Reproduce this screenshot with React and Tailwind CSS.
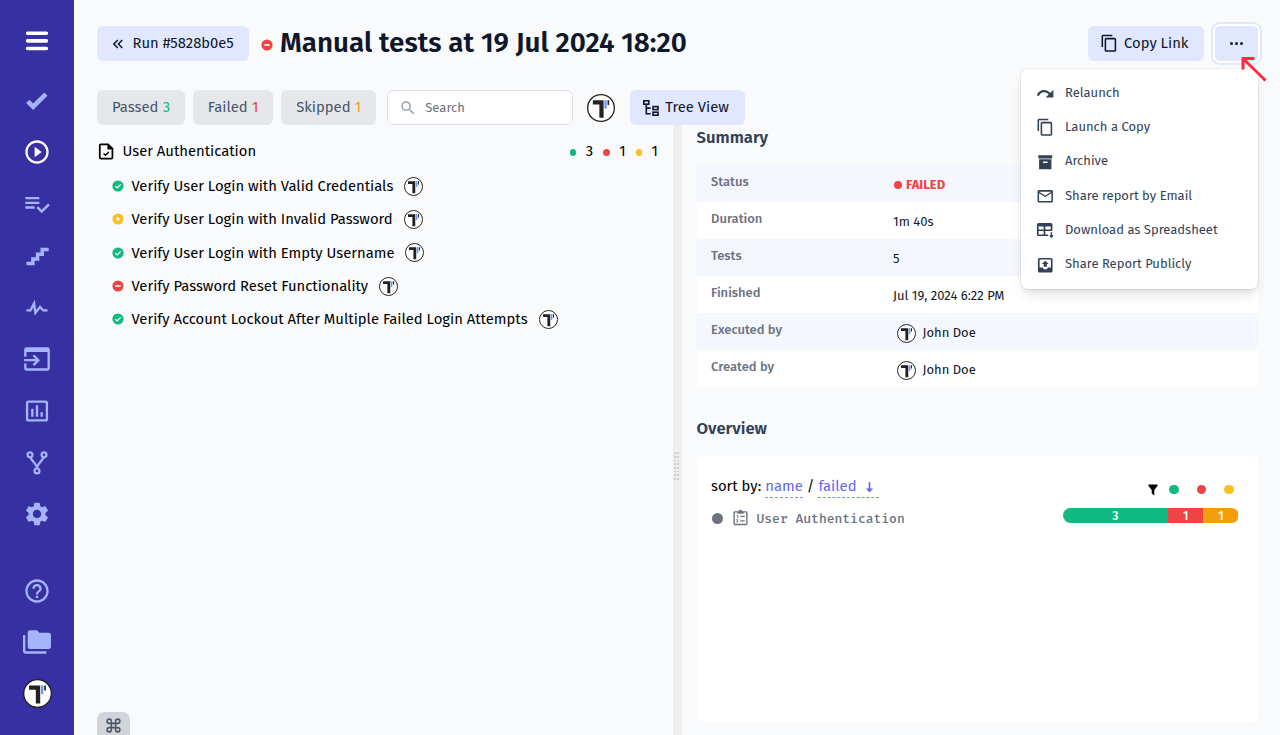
import React from "react";
import { Command } from "lucide-react";
import {
  MdPlayCircleOutline,
  MdInsertChartOutlined,
  MdSettings,
  MdHelpOutline,
  MdMailOutline,
  MdSearch,
} from "react-icons/md";

function Mdi({ d, className }) {
  return (
    <svg viewBox="0 0 24 24" className={className} fill="currentColor">
      <path d={d} />
    </svg>
  );
}

const icons = {
  check: "M9,20.42L2.79,14.21L5.62,11.38L9,14.77L18.88,4.88L21.71,7.71L9,20.42Z",
  playlist:
    "M14 10H2V12H14V10M14 6H2V8H14V6M2 16H10V14H2V16M21.5 11.5L23 13L16 20L11.5 15.5L13 14L16 17L21.5 11.5Z",
  stairs: "M15,5V9H11V13H7V17H3V20H10V16H14V12H18V8H22V5H15Z",
  pulse:
    "M3,13H5.79L10.1,4.79L11.28,13.75L14.5,9.66L17.83,13H21V15H17L14.67,12.67L9.92,18.73L8.94,11.31L7,15H3V13Z",
  importApp:
    "M1,12H10.76L8.26,9.5L9.67,8.08L14.59,13L9.67,17.92L8.26,16.5L10.76,14H1V12M21,2H3C1.89,2 1,2.9 1,4V10.06H3V6H21V20H3V15.94H1V20A2,2 0 0,0 3,22H21A2,2 0 0,0 23,20V4A2,2 0 0,0 21,2Z",
  folders:
    "M22,4H14L12,2H6A2,2 0 0,0 4,4V16A2,2 0 0,0 6,18H22A2,2 0 0,0 24,16V6A2,2 0 0,0 22,4M2,6H0V20A2,2 0 0,0 2,22H20V20H2V6Z",
  chevrons:
    "M18.41,7.41L17,6L11,12L17,18L18.41,16.59L13.83,12L18.41,7.41M12.41,7.41L11,6L5,12L11,18L12.41,16.59L7.83,12L12.41,7.41Z",
  copy: "M19,21H8V7H19M19,5H8A2,2 0 0,0 6,7V21A2,2 0 0,0 8,23H19A2,2 0 0,0 21,21V7A2,2 0 0,0 19,5M16,1H4A2,2 0 0,0 2,3V17H4V3H16V1Z",
  archive: "M3,3H21V7H3V3M4,8H20V21H4V8M9.5,11A0.5,0.5 0 0,0 9,11.5V13H15V11.5A0.5,0.5 0 0,0 14.5,11H9.5Z",
  relaunch:
    "M22.500 7.500V17.500H12.500L16.400 13.700C14.900 11.800 12.900 10.800 10.500 10.800C7.400 10.800 4.900 12.700 3.700 15.600L0.900 14.600C2.500 10.500 6.100 7.900 10.500 7.900C13.700 7.900 16.500 9.300 18.500 11.600L22.500 7.500Z",
  publish:
    "M4.500,2.500H19.500A2,2 0 0,1 21.500,4.500V19.500A2,2 0 0,1 19.500,21.500H4.500A2,2 0 0,1 2.500,19.500V4.500A2,2 0 0,1 4.500,2.500M4.700,4.700V15H8.500C9,16.500 10.300,17.400 12,17.400C13.700,17.400 15,16.500 15.500,15H19.300V4.700H4.700M12,6L16.500,10.500H14V14H10V10.500H7.500L12,6Z",
};

function Logo({ className, ring = 4 }) {
  return (
    <svg viewBox="0 0 86 86" className={className}>
      <circle cx="43" cy="43" r={43 - ring / 2} fill="#fff" stroke="#222" strokeWidth={ring} />
      <path d="M18 19H51V73H38V32H18Z" fill="#222" />
      <path d="M53.500 19H60.500V45H53.500Z" fill="#6d97f7" />
      <path d="M63 19H68V34H63Z" fill="#222" />
    </svg>
  );
}

function Fork({ className }) {
  return (
    <svg viewBox="0 0 24 24" className={className} fill="none" stroke="currentColor" strokeWidth="1.900">
      <circle cx="6" cy="5" r="2.100" />
      <circle cx="18" cy="5" r="2.100" />
      <circle cx="12" cy="18.800" r="2.100" />
      <path d="M6.400 7.200C7.200 10.300 12 12.500 12 16.500M17.600 7.200C16.800 10.300 12 12.500 12 16.500" />
    </svg>
  );
}

function StatusIcon({ kind, className = "size-[12px]" }) {
  const fill = { passed: "#10b981", skipped: "#fbbf24", failed: "#ef4444" }[kind];
  return (
    <svg viewBox="0 0 12 12" className={className}>
      <circle cx="6" cy="6" r="5.600" fill={fill} />
      {kind === "passed" && <path d="M3.300 6.200L5.200 8L8.700 4.300" fill="none" stroke="#fff" strokeWidth="1.200" />}
      {kind === "skipped" && <circle cx="6" cy="6" r="1.700" fill="#fff" />}
      {kind === "failed" && <path d="M3.200 6H8.800" stroke="#fff" strokeWidth="1.500" />}
    </svg>
  );
}

function TreeIcon() {
  return (
    <svg viewBox="0 0 18 18" className="size-[18px]" fill="none" stroke="currentColor" strokeWidth="1.600">
      <rect x="1.800" y="1.800" width="5" height="3.400" />
      <rect x="11" y="7.600" width="5" height="3" />
      <rect x="11" y="13.200" width="5" height="3" />
      <path d="M4.300 5.300V14.700H8.600M4.300 9.100H8.600" />
    </svg>
  );
}

function DocIcon() {
  return (
    <svg viewBox="0 0 24 24" className="size-[19px]" fill="none" stroke="currentColor" strokeWidth="2.200">
      <path d="M14 3H5A1.500 1.500 0 0 0 3.500 4.500V19.500A1.500 1.500 0 0 0 5 21H18A1.500 1.500 0 0 0 19.500 19.500V8.500Z" />
      <path d="M13.500 3V9H19.500Z" fill="currentColor" strokeWidth="0.500" />
      <path d="M8.300 14.500L10.700 16.800L14.900 12.600" strokeWidth="1.900" />
    </svg>
  );
}

function SheetIcon({ className }) {
  return (
    <svg viewBox="0 0 24 24" className={className} fill="none" stroke="currentColor" strokeWidth="2.200">
      <path d="M15.500 18.500H3.500A1.200 1.200 0 0 1 2.300 17.300V5A1.200 1.200 0 0 1 3.500 3.800H19A1.200 1.200 0 0 1 20.200 5V12.500M2 12H20.500M11 6V18.500" />
      <path d="M3 5.200H19.800" strokeWidth="3.800" />
      <path d="M20 14.500V21" strokeWidth="1.800" />
      <path d="M17 18.500H23L20 22.300Z" fill="currentColor" stroke="none" />
    </svg>
  );
}

function ClipboardIcon() {
  return (
    <svg viewBox="0 0 16 18" className="h-[17px] w-[15px]" fill="none" stroke="currentColor" strokeWidth="1.500">
      <path d="M5 3H2A0.800 0.800 0 0 0 1.200 3.800V15.700A0.800 0.800 0 0 0 2 16.500H14A0.800 0.800 0 0 0 14.800 15.700V3.800A0.800 0.800 0 0 0 14 3H11" />
      <path d="M5 4.500V2.500H6.500A1.500 1.500 0 0 1 9.500 2.500H11V4.500Z" fill="currentColor" strokeWidth="0.800" />
      <path d="M7.800 7.800H12.500M7.800 12.500H12.500" strokeWidth="1.400" />
      <path d="M3.900 6.700H5V9.600M3.700 11.300H5.200L3.900 13.700H5.500" strokeWidth="1" />
    </svg>
  );
}

function Sidebar() {
  const row = "flex h-[51.700px] items-center justify-center";
  const ic = "size-[28px]";
  return (
    <nav className="flex w-[74px] shrink-0 flex-col border-r border-[#3b35a8] bg-[#3730a3] text-[#a5b4fc]">
      <div className="flex h-[75px] items-center justify-center pt-[7px] text-white">
        <svg viewBox="0 0 24 22" className="h-[22px] w-[24px]" stroke="currentColor" strokeWidth="3.600" strokeLinecap="round">
          <path d="M2.600 3.300H21.400M2.600 10.900H21.400M2.600 18.500H21.400" />
        </svg>
      </div>
      <div className={row}><Mdi d={icons.check} className="size-[27px]" /></div>
      <div className={row + " pb-px text-white"}><MdPlayCircleOutline className={ic} /></div>
      <div className={row}><Mdi d={icons.playlist} className={ic} /></div>
      <div className={row}><Mdi d={icons.stairs} className={ic} /></div>
      <div className={row}><Mdi d={icons.pulse} className={ic} /></div>
      <div className={row}><Mdi d={icons.importApp} className={ic} /></div>
      <div className={row}><MdInsertChartOutlined className={ic} /></div>
      <div className={row}><Fork className={ic} /></div>
      <div className={row}><MdSettings className={ic} /></div>
      <div className={"mt-[24.500px] " + row}><MdHelpOutline className={ic} /></div>
      <div className={row}><Mdi d={icons.folders} className={ic} /></div>
      <div className={row + " pl-px"}><Logo className="size-[29px]" /></div>
    </nav>
  );
}

function Header() {
  return (
    <header className="flex h-[35px] items-center">
      <button className="flex h-[35px] w-[152px] items-center rounded-[6px] bg-[#e0e7ff] pl-[11.500px] text-[#0f172a]">
        <Mdi d={icons.chevrons} className="mr-[6px] size-[18px]" />
        Run #5828b0e5
      </button>
      <StatusIcon kind="failed" className="mt-[3px] ml-[11.500px] size-[12px]" />
      <h1 className="-mt-[2px] ml-[7.500px] text-[27.800px] leading-[35px] font-semibold text-[#0f172a]">Manual tests at 19 Jul 2024 18:20</h1>
      <button className="ml-auto flex h-[35px] w-[116px] items-center rounded-[6px] bg-[#e0e7ff] pl-[11.500px] text-[#0f172a]">
        <Mdi d={icons.copy} className="mr-[6px] size-[18.500px]" />
        Copy Link
      </button>
      <div className="relative ml-[11px]">
        <button className="flex h-[35px] w-[43px] items-center justify-center gap-[1.800px] rounded-[5px] bg-[#e0e7ff] text-[#0f172a] ring-2 ring-[#e0e7ff] ring-offset-2 ring-offset-white">
          <i className="size-[3px] rounded-full bg-current" />
          <i className="size-[3px] rounded-full bg-current" />
          <i className="size-[3px] rounded-full bg-current" />
        </button>
        <Menu />
        <svg viewBox="0 0 26 26" className="absolute top-[30px] left-[26px] z-20 size-[26px]" fill="none" stroke="#fb2c42" strokeWidth="3">
          <path d="M2 13.500V2.500H13.500M2.500 3L24.500 24.500" />
        </svg>
      </div>
    </header>
  );
}

function Menu() {
  const ic = "size-[18.500px]";
  const items = [
    ["Relaunch", <Mdi d={icons.relaunch} className={ic} />],
    ["Launch a Copy", <Mdi d={icons.copy} className={ic} />],
    ["Archive", <Mdi d={icons.archive} className={ic} />],
    ["Share report by Email", <MdMailOutline className={ic} />],
    ["Download as Spreadsheet", <SheetIcon className={ic} />],
    ["Share Report Publicly", <Mdi d={icons.publish} className={ic} />],
  ];
  return (
    <ul className="absolute top-[42.500px] right-[0.500px] z-10 w-[237px] rounded-[7px] bg-white pt-[6.600px] pb-[7.600px] text-[13px] text-[#334155] shadow-[0_0_0_1px_rgba(0,0,0,0.05),0_8px_14px_-3px_rgba(0,0,0,0.12),0_3px_6px_-3px_rgba(0,0,0,0.1)]">
      {items.map(([label, icon]) => (
        <li key={label} className="flex h-[34.400px] items-center gap-[11px] pl-[15px]">
          <span className="mt-[1.500px]">{icon}</span>
          {label}
        </li>
      ))}
    </ul>
  );
}

function Filters() {
  const btn = "flex h-[35px] items-center gap-[4.300px] rounded-[6px] bg-[#e5e7eb] px-[15px] text-[#475569]";
  return (
    <div className="mt-[29px] flex h-[35px] items-center">
      <button className={btn}>Passed <span className="text-[#10b981]">3</span></button>
      <button className={btn + " ml-[7.800px]"}>Failed <span className="text-[#ef4444]">1</span></button>
      <button className={btn + " ml-[7.800px]"}>Skipped <span className="text-[#f59e0b]">1</span></button>
      <div className="ml-[11px] flex h-[35px] w-[186px] items-center rounded-[6px] border border-[#dde1ea] bg-white pl-[11px] text-[13px] text-[#6b7280]">
        <MdSearch className="mr-[8px] size-[18px] text-[#9ca3af]" />
        Search
      </div>
      <Logo className="ml-[14px] size-[28px]" ring={4} />
      <button className="relative z-10 ml-[14.500px] flex h-[35px] w-[115px] items-center rounded-[6px] bg-[#e0e7ff] pl-[12.500px] text-[#0f172a]">
        <span className="mr-[5px]"><TreeIcon /></span>
        Tree View
      </button>
    </div>
  );
}

const tests = [
  ["passed", "Verify User Login with Valid Credentials"],
  ["skipped", "Verify User Login with Invalid Password"],
  ["passed", "Verify User Login with Empty Username"],
  ["failed", "Verify Password Reset Functionality"],
  ["passed", "Verify Account Lockout After Multiple Failed Login Attempts"],
];

function TestTree() {
  return (
    <section className="flex w-[575.500px] flex-col text-black">
      <div className="flex h-[44.500px] items-center pt-[8px] pr-[14.500px]">
        <DocIcon />
        <span className="ml-[6.500px]">User Authentication</span>
        <div className="ml-auto flex items-center">
          <i className="mt-[2px] mr-[9.500px] size-[6.500px] rounded-full bg-[#10b981]" />3
          <i className="mt-[2px] mr-[9.500px] ml-[10px] size-[6.500px] rounded-full bg-[#ef4444]" />1
          <i className="mt-[2px] mr-[9.500px] ml-[10px] size-[6.500px] rounded-full bg-[#fbbf24]" />1
        </div>
      </div>
      <ul>
        {tests.map(([kind, name]) => (
          <li key={name} className="flex h-[33.300px] items-center pl-[15px]">
            <StatusIcon kind={kind} />
            <span className="ml-[7.500px]">{name}</span>
            <Logo className="ml-[11px] size-[19px]" ring={4.500} />
          </li>
        ))}
      </ul>
      <button className="mt-auto flex h-[23px] w-[33px] items-start justify-center rounded-t-[8px] bg-[#d1d5db] pt-[5px] text-[#4b5563]">
        <Command className="size-[17px]" strokeWidth={2.200} />
      </button>
    </section>
  );
}

function Splitter() {
  return (
    <div className="flex w-[9px] items-center justify-center bg-[#eeeeef] pt-[72px] pr-px">
      <div className="grid grid-cols-2 gap-x-[1.500px] gap-y-[2px]">
        {Array.from({ length: 16 }, (_, i) => (
          <i key={i} className="h-[1.700px] w-[2px] bg-[#cfcfcf]" />
        ))}
      </div>
    </div>
  );
}

const user = (
  <span className="flex items-center gap-[7px] pl-[3.500px]">
    <Logo className="size-[19px]" ring={4.500} />
    John Doe
  </span>
);

const summary = [
  ["Status", <span className="flex items-center gap-[4.500px] font-bold text-[#ef4444]"><i className="ml-px size-[7.500px] rounded-full bg-[#ef4444]" />FAILED</span>],
  ["Duration", "1m 40s"],
  ["Tests", "5"],
  ["Finished", "Jul 19, 2024 6:22 PM"],
  ["Executed by", user],
  ["Created by", user],
];

function Details() {
  return (
    <section className="flex w-[576.500px] flex-col pl-[15px]">
      <h2 className="h-[40px] text-[16.700px] leading-[24px] font-semibold text-[#334155]">Summary</h2>
      <dl className="text-[13px]">
        {summary.map(([label, value]) => (
          <div key={label} className="flex h-[37px] bg-white pl-[14.500px] odd:bg-[#f5f7ff]">
            <dt className="w-[182px] pt-[8px] leading-[18px] font-medium text-[#6b7280]">{label}</dt>
            <dd className="flex h-full items-center pt-[3px] text-[#111827]">{value}</dd>
          </div>
        ))}
      </dl>
      <h2 className="mt-[29px] text-[16.700px] leading-[24px] font-semibold text-[#334155]">Overview</h2>
      <div className="mt-[16px] flex h-[266px] justify-between rounded-[8px] bg-white pt-[19px] pr-[19.500px] pl-[14.500px]">
        <div>
          <div className="flex items-start gap-[4px] leading-[22px] text-black">
            sort by:
            <span className="border-b border-dashed border-[#818cf8] text-[#6366f1]">name</span>
            /
            <span className="flex items-center border-b border-dashed border-[#818cf8] text-[#6366f1]">
              failed
              <svg viewBox="0 0 10 12" className="mt-[2px] mr-[4.500px] ml-[8.500px] h-[11px] w-[9px]" fill="currentColor">
                <path d="M4.100 0H5.900V7H9L5 11.500L1 7H4.100Z" />
              </svg>
            </span>
          </div>
          <div className="mt-[9px] flex items-center font-['Fira_Mono','Fira_Code','DejaVu_Sans_Mono',monospace] text-[13px] leading-[23px] font-medium text-[#6b7280]">
            <i className="ml-[1px] size-[11px] rounded-full bg-[#6b7280]" />
            <span className="-mt-[2px] mr-[8.500px] ml-[10px]"><ClipboardIcon /></span>
            User Authentication
          </div>
        </div>
        <div className="w-[176px]">
          <div className="mt-[9.500px] flex h-[10px] items-center justify-end pr-[5px]">
            <svg viewBox="0 0 10 12" className="mr-[11px] h-[12px] w-[10px]" fill="currentColor">
              <path d="M0.500 0.500H9.500V2L6.300 6V11.500L3.700 9.500V6L0.500 2Z" />
            </svg>
            <i className="mr-[18px] size-[9.500px] rounded-full bg-[#10b981]" />
            <i className="mr-[18px] size-[9.500px] rounded-full bg-[#ef4444]" />
            <i className="size-[9.500px] rounded-full bg-[#fbbf24]" />
          </div>
          <div className="mt-[13.500px] flex h-[15px] overflow-hidden rounded-full text-center text-[12px] leading-[16px] font-medium text-white">
            <span className="w-3/5 bg-[#10b981]">3</span>
            <span className="w-1/5 bg-[#ef4444]">1</span>
            <span className="w-1/5 bg-[#f59e0b]">1</span>
          </div>
        </div>
      </div>
    </section>
  );
}

export default function App() {
  return (
    <div className="flex h-[735px] w-[1280px] overflow-hidden bg-[#f9fafc] font-['Fira_Sans','Noto_Sans',sans-serif] text-[14.820px]">
      <Sidebar />
      <main className="flex w-[1184px] flex-col pt-[26px] pl-[23px]">
        <div className="w-[1161px]"><Header /></div>
        <Filters />
        <div className="flex min-h-0 flex-1">
          <TestTree />
          <Splitter />
          <Details />
        </div>
      </main>
    </div>
  );
}
